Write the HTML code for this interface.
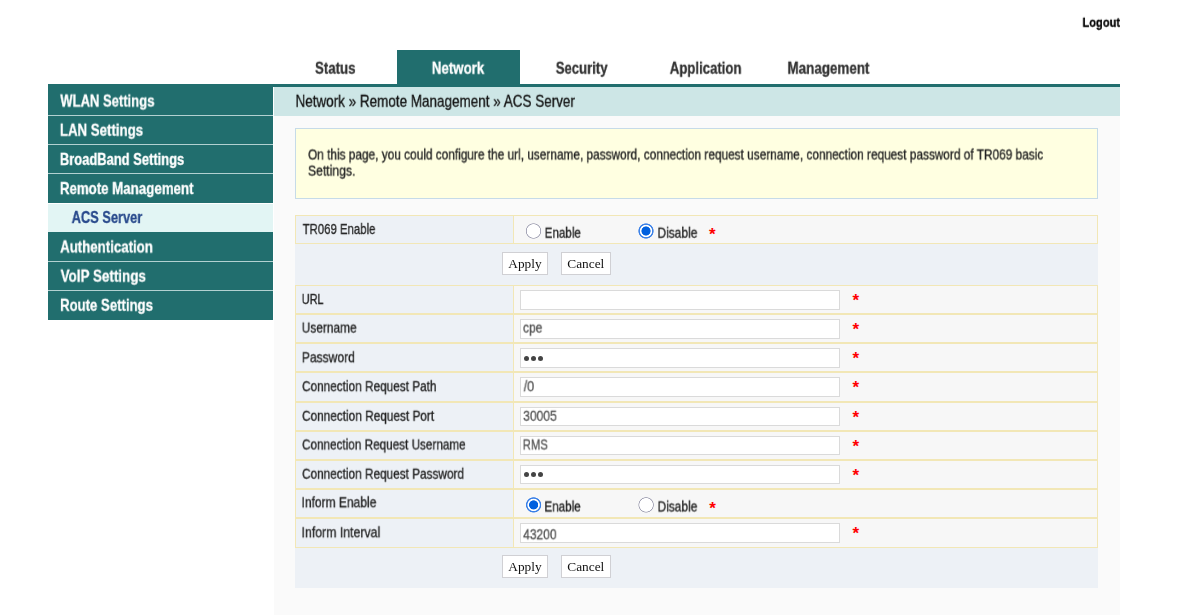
<!DOCTYPE html>
<html lang="en"><head><meta charset="utf-8"><title>ACS Server</title>
<style>
html,body{margin:0;padding:0;background:#fff}
body{width:1200px;height:615px;position:relative;overflow:hidden;font-family:"Liberation Sans",sans-serif}
.a{position:absolute}
.t{position:absolute;white-space:nowrap;line-height:1;transform-origin:0 0;display:block;will-change:transform;-webkit-text-stroke:0.3px currentColor}
.teal{background:#216e6e}
.sep{position:absolute;left:48px;width:224.8px;height:1px;background:#b2d1d1}
.cell{position:absolute;box-sizing:border-box;border:1.25px solid #f2e7b6}
.lab{background:#edf1f6}
.val{background:#f7f7f7}
.inp{position:absolute;left:519.8px;width:320.6px;height:19.4px;box-sizing:border-box;border:1px solid #dadada;background:#fff}
.btn{position:absolute;height:23.2px;box-sizing:border-box;border:1px solid #d0d0d4;background:#fff;font-family:"Liberation Serif",serif;font-size:13.33px;line-height:21.2px;text-align:center;color:#111;will-change:transform}
.star{position:absolute;color:#f00;font-family:"Liberation Sans",sans-serif;font-weight:bold;font-size:17px;line-height:1}
.ro{position:absolute;width:17px;height:17px;background:radial-gradient(circle at var(--cx) var(--cy),#fff 0,#fff 6.5px,#a3a3b5 7.05px,#a3a3b5 7.35px,rgba(163,163,181,0) 7.95px)}
.rc{position:absolute;width:17px;height:17px;background:radial-gradient(circle at var(--cx) var(--cy),#0060df 0,#0060df 4.2px,#fff 4.9px,#fff 5.8px,#3a80e7 6.55px,#3a80e7 7.25px,rgba(58,128,231,0) 7.95px)}
.dot{position:absolute;width:5px;height:5px;border-radius:50%;background:#444}
</style></head><body>

<div class="a teal" style="left:396.6px;top:50px;width:123px;height:35px"></div>
<div class="a teal" style="left:48px;top:84px;width:1072px;height:2.7px"></div>
<div class="a teal" style="left:48px;top:86px;width:224.8px;height:233.6px"></div>
<div class="sep" style="top:114.75px"></div>
<div class="sep" style="top:144.0px"></div>
<div class="sep" style="top:173.0px"></div>
<div class="sep" style="top:260.75px"></div>
<div class="sep" style="top:290.0px"></div>
<div class="a" style="left:48px;top:202.8px;width:224.8px;height:29.6px;background:#fff"></div>
<div class="a" style="left:48px;top:204.1px;width:224.8px;height:28px;background:#e2f5f4"></div>
<div class="a" style="left:274px;top:86.7px;width:846px;height:28.9px;background:#cde6e6"></div>
<div class="a" style="left:274px;top:115.6px;width:846px;height:500px;background:#fafafa"></div>
<div class="a" style="left:295.3px;top:127.5px;width:802.7px;height:71.5px;box-sizing:border-box;border:1px solid #c6dbe8;background:#ffffe1"></div>
<div class="cell lab" style="left:295.3px;top:215.4px;width:218.8px;height:28.2px"></div>
<div class="cell val" style="left:513.1px;top:215.4px;width:584.9px;height:28.2px"></div>
<div class="a" style="left:295.3px;top:243.6px;width:802.7px;height:41.4px;background:#edf1f6"></div>
<div class="cell lab" style="left:295.3px;top:284.8px;width:218.8px;height:29.2px"></div>
<div class="cell val" style="left:513.1px;top:284.8px;width:584.9px;height:29.2px"></div>
<div class="cell lab" style="left:295.3px;top:314.0px;width:218.8px;height:29.2px"></div>
<div class="cell val" style="left:513.1px;top:314.0px;width:584.9px;height:29.2px"></div>
<div class="cell lab" style="left:295.3px;top:343.2px;width:218.8px;height:29.2px"></div>
<div class="cell val" style="left:513.1px;top:343.2px;width:584.9px;height:29.2px"></div>
<div class="cell lab" style="left:295.3px;top:372.4px;width:218.8px;height:29.2px"></div>
<div class="cell val" style="left:513.1px;top:372.4px;width:584.9px;height:29.2px"></div>
<div class="cell lab" style="left:295.3px;top:401.6px;width:218.8px;height:29.2px"></div>
<div class="cell val" style="left:513.1px;top:401.6px;width:584.9px;height:29.2px"></div>
<div class="cell lab" style="left:295.3px;top:430.8px;width:218.8px;height:29.2px"></div>
<div class="cell val" style="left:513.1px;top:430.8px;width:584.9px;height:29.2px"></div>
<div class="cell lab" style="left:295.3px;top:460.0px;width:218.8px;height:29.2px"></div>
<div class="cell val" style="left:513.1px;top:460.0px;width:584.9px;height:29.2px"></div>
<div class="cell lab" style="left:295.3px;top:489.2px;width:218.8px;height:29.2px"></div>
<div class="cell val" style="left:513.1px;top:489.2px;width:584.9px;height:29.2px"></div>
<div class="cell lab" style="left:295.3px;top:518.4px;width:218.8px;height:29.2px"></div>
<div class="cell val" style="left:513.1px;top:518.4px;width:584.9px;height:29.2px"></div>
<div class="a" style="left:295.3px;top:547.60px;width:802.7px;height:40.1px;background:#edf1f6"></div>
<div class="inp" style="top:290.20px"></div>
<div class="star" style="left:852.5px;top:292.10px">*</div>
<div class="inp" style="top:319.30px"></div>
<div class="star" style="left:852.5px;top:321.20px">*</div>
<div class="inp" style="top:348.40px"></div>
<div class="star" style="left:852.5px;top:350.30px">*</div>
<div class="inp" style="top:377.30px"></div>
<div class="star" style="left:852.5px;top:379.20px">*</div>
<div class="inp" style="top:407.00px"></div>
<div class="star" style="left:852.5px;top:408.90px">*</div>
<div class="inp" style="top:435.60px"></div>
<div class="star" style="left:852.5px;top:437.50px">*</div>
<div class="inp" style="top:464.80px"></div>
<div class="star" style="left:852.5px;top:466.70px">*</div>
<div class="inp" style="top:523.30px"></div>
<div class="star" style="left:852.5px;top:525.20px">*</div>
<div class="dot" style="left:523.90px;top:355.80px"></div>
<div class="dot" style="left:530.97px;top:355.80px"></div>
<div class="dot" style="left:538.04px;top:355.80px"></div>
<div class="dot" style="left:523.90px;top:472.20px"></div>
<div class="dot" style="left:530.97px;top:472.20px"></div>
<div class="dot" style="left:538.04px;top:472.20px"></div>
<div class="ro" style="left:525px;top:223px;--cx:8.5px;--cy:8px"></div><div class="rc" style="left:638px;top:223px;--cx:8px;--cy:8px"></div>
<div class="star" style="left:709.1px;top:226.0px">*</div>
<div class="rc" style="left:525px;top:497px;--cx:8.6px;--cy:7.9px"></div><div class="ro" style="left:638px;top:497px;--cx:8.1px;--cy:7.9px"></div>
<div class="star" style="left:709.2px;top:500.2px">*</div>
<div class="btn" style="left:502.1px;top:252.2px;width:45.9px">Apply</div>
<div class="btn" style="left:561px;top:252.2px;width:49.6px">Cancel</div>
<div class="btn" style="left:502.1px;top:555.4px;width:45.9px">Apply</div>
<div class="btn" style="left:561px;top:555.4px;width:49.6px">Cancel</div>
<div class="t" style="left:1082px;top:15px;font-size:13.6px;font-weight:bold;color:#000;transform:translate(0.50px,0.80px) scaleX(0.8145)">Logout</div>
<div class="t" style="left:315px;top:59px;font-size:16.2px;font-weight:bold;color:#333;transform:translate(0.00px,0.70px) scaleX(0.8187)">Status</div>
<div class="t" style="left:431px;top:59px;font-size:16.2px;font-weight:bold;color:#fff;transform:translate(0.75px,0.70px) scaleX(0.8228)">Network</div>
<div class="t" style="left:555px;top:59px;font-size:16.2px;font-weight:bold;color:#333;transform:translate(0.75px,0.70px) scaleX(0.8100)">Security</div>
<div class="t" style="left:669px;top:59px;font-size:16.2px;font-weight:bold;color:#333;transform:translate(0.75px,0.70px) scaleX(0.8142)">Application</div>
<div class="t" style="left:787px;top:59px;font-size:16.2px;font-weight:bold;color:#333;transform:translate(0.45px,0.70px) scaleX(0.8283)">Management</div>
<div class="t" style="left:60px;top:92px;font-size:16.2px;font-weight:bold;color:#fff;transform:translate(0.30px,0.55px) scaleX(0.8054)">WLAN Settings</div>
<div class="t" style="left:59px;top:121px;font-size:16.2px;font-weight:bold;color:#fff;transform:translate(0.85px,0.73px) scaleX(0.8194)">LAN Settings</div>
<div class="t" style="left:59px;top:150px;font-size:16.2px;font-weight:bold;color:#fff;transform:translate(0.85px,0.91px) scaleX(0.7996)">BroadBand Settings</div>
<div class="t" style="left:59px;top:180px;font-size:16.2px;font-weight:bold;color:#fff;transform:translate(0.85px,0.09px) scaleX(0.8206)">Remote Management</div>
<div class="t" style="left:71px;top:209px;font-size:15.6px;font-weight:bold;color:#2a4b8d;transform:translate(0.65px,0.97px) scaleX(0.8227)">ACS Server</div>
<div class="t" style="left:60px;top:238px;font-size:16.2px;font-weight:bold;color:#fff;transform:translate(0.15px,0.45px) scaleX(0.8177)">Authentication</div>
<div class="t" style="left:60px;top:267px;font-size:16.2px;font-weight:bold;color:#fff;transform:translate(0.60px,0.63px) scaleX(0.8299)">VoIP Settings</div>
<div class="t" style="left:60px;top:296px;font-size:16.2px;font-weight:bold;color:#fff;transform:translate(0.05px,0.81px) scaleX(0.8130)">Route Settings</div>
<div class="t" style="left:295px;top:93px;font-size:16.6px;color:#111;transform:translate(0.50px,0.80px) scaleX(0.8120)">Network » Remote Management » ACS Server</div>
<div class="t" style="left:308px;top:148px;font-size:13.9px;color:#222;transform:translate(0.00px,0.50px) scaleX(0.8527)">On this page, you could configure the url, username, password, connection request username, connection request password of TR069 basic</div>
<div class="t" style="left:307px;top:164px;font-size:13.9px;color:#222;transform:translate(0.90px,0.60px) scaleX(0.8795)">Settings.</div>
<div class="t" style="left:302px;top:222px;font-size:14.1px;color:#222;transform:translate(0.65px,0.05px) scaleX(0.8069)">TR069 Enable</div>
<div class="t" style="left:301px;top:292px;font-size:14.1px;color:#222;transform:translate(0.75px,0.05px) scaleX(0.7744)">URL</div>
<div class="t" style="left:301px;top:320px;font-size:14.1px;color:#222;transform:translate(0.75px,0.60px) scaleX(0.8426)">Username</div>
<div class="t" style="left:301px;top:350px;font-size:14.1px;color:#222;transform:translate(0.75px,0.30px) scaleX(0.8594)">Password</div>
<div class="t" style="left:302px;top:379px;font-size:14.1px;color:#222;transform:translate(0.00px,0.20px) scaleX(0.8374)">Connection Request Path</div>
<div class="t" style="left:302px;top:408px;font-size:14.1px;color:#222;transform:translate(0.00px,0.80px) scaleX(0.8391)">Connection Request Port</div>
<div class="t" style="left:302px;top:437px;font-size:14.1px;color:#222;transform:translate(0.00px,0.50px) scaleX(0.8323)">Connection Request Username</div>
<div class="t" style="left:302px;top:466px;font-size:14.1px;color:#222;transform:translate(0.00px,0.70px) scaleX(0.8367)">Connection Request Password</div>
<div class="t" style="left:301px;top:495px;font-size:14.1px;color:#222;transform:translate(0.50px,0.30px) scaleX(0.8527)">Inform Enable</div>
<div class="t" style="left:301px;top:525px;font-size:14.1px;color:#222;transform:translate(0.50px,0.30px) scaleX(0.8741)">Inform Interval</div>
<div class="t" style="left:522px;top:321px;font-size:13.8px;color:#555;transform:translate(0.95px,0.60px) scaleX(0.8731)">cpe</div>
<div class="t" style="left:523px;top:380px;font-size:13.8px;color:#555;transform:translate(0.70px,0.20px) scaleX(0.9118)">/0</div>
<div class="t" style="left:523px;top:409px;font-size:13.8px;color:#555;transform:translate(0.20px,0.80px) scaleX(0.8746)">30005</div>
<div class="t" style="left:522px;top:438px;font-size:13.8px;color:#555;transform:translate(0.70px,0.50px) scaleX(0.8186)">RMS</div>
<div class="t" style="left:523px;top:528px;font-size:13.8px;color:#555;transform:translate(0.20px,0.30px) scaleX(0.8693)">43200</div>
<div class="t" style="left:544px;top:225px;font-size:14.1px;color:#222;transform:translate(0.65px,0.70px) scaleX(0.8256)">Enable</div>
<div class="t" style="left:657px;top:225px;font-size:14.1px;color:#222;transform:translate(0.45px,0.70px) scaleX(0.8482)">Disable</div>
<div class="t" style="left:544px;top:499px;font-size:14.1px;color:#222;transform:translate(0.35px,0.50px) scaleX(0.8289)">Enable</div>
<div class="t" style="left:657px;top:499px;font-size:14.1px;color:#222;transform:translate(0.55px,0.50px) scaleX(0.8451)">Disable</div>
</body></html>
